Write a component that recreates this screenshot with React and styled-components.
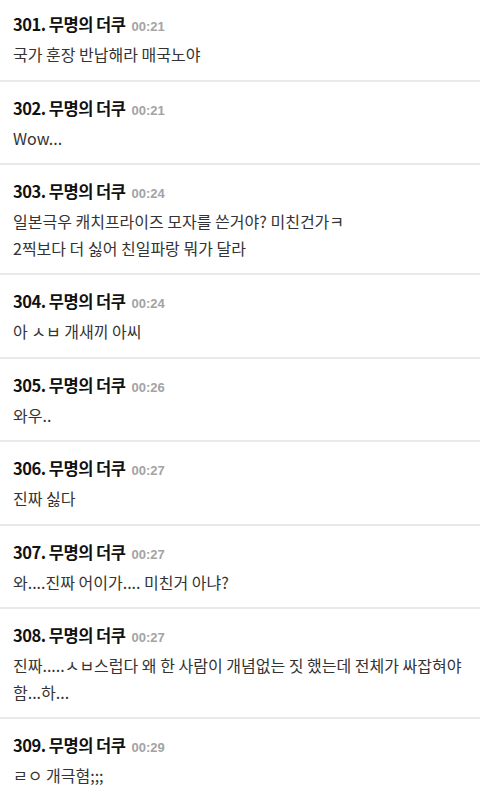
import React from "react";
import styled, { createGlobalStyle } from "styled-components";

const Global = createGlobalStyle`
  html, body { margin: 0; padding: 0; background: #fff; }
  body { font-family: "Noto Sans CJK KR", "Noto Sans", sans-serif; }
`;

const List = styled.div`
  margin-top: -2px;
  display: flex;
  flex-direction: column;
`;

const Item = styled.div`
  padding: 14px 13px 12px;
  border-bottom: 2px solid #e9e9e9;
`;

const Header = styled.div`
  display: flex;
  align-items: baseline;
  gap: 6px;
  height: 24px;
  line-height: 24px;
`;

const Name = styled.span`
  font-size: 16.5px;
  font-weight: 700;
  color: #111;
  letter-spacing: -0.5px;
`;

const Time = styled.span`
  font-size: 13px;
  font-weight: 700;
  color: #a3a3a3;
  font-family: "Liberation Sans", "Noto Sans CJK KR", sans-serif;
`;

const Body = styled.div`
  margin-top: 5px;
  font-size: 16px;
  line-height: 26.5px;
  color: #333;
`;

const posts = [
  { n: 301, t: "00:21", b: "국가 훈장 반납해라 매국노야" },
  { n: 302, t: "00:21", b: "Wow..." },
  { n: 303, t: "00:24", b: "일본극우 캐치프라이즈 모자를 쓴거야? 미친건가ㅋ\n2찍보다 더 싫어 친일파랑 뭐가 달라" },
  { n: 304, t: "00:24", b: "아 ㅅㅂ 개새끼 아씨" },
  { n: 305, t: "00:26", b: "와우.." },
  { n: 306, t: "00:27", b: "진짜 싫다" },
  { n: 307, t: "00:27", b: "와....진짜 어이가.... 미친거 아냐?" },
  { n: 308, t: "00:27", b: "진짜.....ㅅㅂ스럽다 왜 한 사람이 개념없는 짓 했는데 전체가 싸잡혀야 함...하..." },
  { n: 309, t: "00:29", b: "ㄹㅇ 개극혐;;;" },
];

export default function App() {
  return (
    <>
      <Global />
      <List>
        {posts.map((p) => (
          <Item key={p.n}>
            <Header>
              <Name>{p.n}. 무명의 더쿠</Name>
              <Time>{p.t}</Time>
            </Header>
            <Body>
              {p.b.split("\n").map((l, i) => (
                <div key={i}>{l}</div>
              ))}
            </Body>
          </Item>
        ))}
      </List>
    </>
  );
}
